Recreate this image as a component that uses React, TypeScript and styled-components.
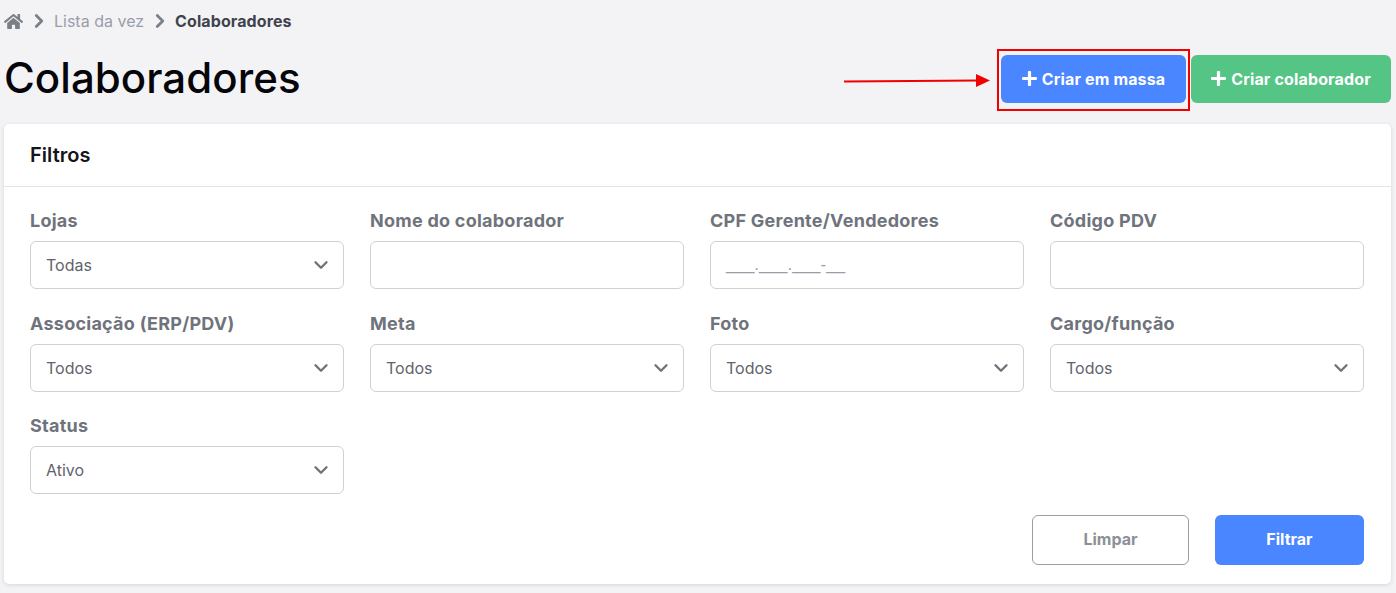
import React from 'react';
import styled, { createGlobalStyle } from 'styled-components';
import { FaHome, FaPlus } from 'react-icons/fa';
import { FiChevronDown, FiChevronRight } from 'react-icons/fi';

const GlobalStyle = createGlobalStyle`
  html, body {
    margin: 0;
    padding: 0;
    background: #f3f3f6;
    font-family: "Inter", "Liberation Sans", sans-serif;
  }
  * { box-sizing: border-box; }
`;

type FieldDef = { label: string; value?: string; select?: boolean; mask?: boolean };

const FIELDS: FieldDef[] = [
  { label: 'Lojas', value: 'Todas', select: true },
  { label: 'Nome do colaborador' },
  { label: 'CPF Gerente/Vendedores', value: '___.___.___-__', mask: true },
  { label: 'Código PDV' },
  { label: 'Associação (ERP/PDV)', value: 'Todos', select: true },
  { label: 'Meta', value: 'Todos', select: true },
  { label: 'Foto', value: 'Todos', select: true },
  { label: 'Cargo/função', value: 'Todos', select: true },
  { label: 'Status', value: 'Ativo', select: true },
];

export default function App() {
  return (
    <Page>
      <GlobalStyle />
      <Breadcrumb>
        <HomeIcon size={19} />
        <Sep><FiChevronRight size={22} strokeWidth={3} /></Sep>
        <Crumb>Lista da vez</Crumb>
        <Sep><FiChevronRight size={22} strokeWidth={3} /></Sep>
        <Crumb $current>Colaboradores</Crumb>
      </Breadcrumb>

      <Header>
        <Title>Colaboradores</Title>
        <Actions>
          <Highlight>
            <Arrow width="147" height="14" viewBox="0 0 147 14">
              <line x1="0" y1="7.5" x2="134" y2="6.5" stroke="#f00000" strokeWidth="2" />
              <polygon points="132,0 146,6.5 132,13" fill="#f00000" />
            </Arrow>
            <ActionButton $color="#4a86ff">
              <FaPlus size={17} /> Criar em massa
            </ActionButton>
          </Highlight>
          <ActionButton $color="#55c585" $wide>
            <FaPlus size={17} /> Criar colaborador
          </ActionButton>
        </Actions>
      </Header>

      <Card>
        <CardHeader>Filtros</CardHeader>
        <CardBody>
          <Grid>
            {FIELDS.map((f) => (
              <Field key={f.label}>
                <Label>{f.label}</Label>
                <Control $mask={f.mask}>
                  {f.value}
                  {f.select && (
                    <Chevron><FiChevronDown size={22} strokeWidth={2.6} /></Chevron>
                  )}
                </Control>
              </Field>
            ))}
          </Grid>
          <Footer>
            <Clear>Limpar</Clear>
            <Submit>Filtrar</Submit>
          </Footer>
        </CardBody>
      </Card>
    </Page>
  );
}

const Page = styled.div`
  width: 1396px;
  height: 593px;
  padding: 0 5px 0 4px;
  overflow: hidden;
`;
const Breadcrumb = styled.div`
  display: flex;
  align-items: center;
  height: 42px;
  font-size: 16px;
`;
const HomeIcon = styled(FaHome)`
  color: #7b8088;
  margin-right: 2px;
`;
const Sep = styled.span`
  display: flex;
  color: #7b8088;
  margin: 0 2px 0 3px;
`;
const Crumb = styled.span<{ $current?: boolean }>`
  color: ${(p) => (p.$current ? '#3f434c' : '#9a9ea8')};
  font-weight: ${(p) => (p.$current ? 700 : 400)};
  letter-spacing: ${(p) => (p.$current ? '0.1px' : '0')};
  margin: 0 2px;
`;
const Header = styled.div`
  display: flex;
  align-items: flex-start;
  justify-content: space-between;
  height: 72px;
`;
const Title = styled.h1`
  margin: 0;
  line-height: 72px;
  font-size: 42px;
  font-weight: 500;
  letter-spacing: 0.05px;
  color: #06060a;
`;
const Actions = styled.div`
  display: flex;
  align-items: flex-start;
  margin-top: 7px;
`;
const Highlight = styled.div`
  position: relative;
  display: flex;
  border: 2px solid #f00000;
  margin-right: 1px;
  padding: 4px 2px 6px 2px;
`;
const Arrow = styled.svg`
  position: absolute;
  left: -155px;
  top: 23px;
`;
const ActionButton = styled.button<{ $color: string; $wide?: boolean }>`
  display: flex;
  align-items: center;
  justify-content: center;
  gap: 4px;
  width: ${(p) => (p.$wide ? 200 : 185)}px;
  height: 48px;
  padding: 0 1px 1px 0;
  margin-top: ${(p) => (p.$wide ? 6 : 0)}px;
  border: none;
  border-radius: 6px;
  background: ${(p) => p.$color};
  color: #fff;
  font-family: "Inter", sans-serif;
  font-size: 16px;
  font-weight: 700;
  letter-spacing: 0.15px;
`;
const Card = styled.section`
  height: 460px;
  margin-top: 10px;
  background: #fff;
  border-radius: 5px;
  box-shadow: 0 1px 4px rgba(0, 0, 0, 0.12);
`;
const CardHeader = styled.div`
  display: flex;
  align-items: center;
  height: 63px;
  padding: 0 26px;
  border-bottom: 1px solid #e3e4e8;
  font-size: 20px;
  font-weight: 600;
  letter-spacing: 0.05px;
  color: #14141a;
`;
const CardBody = styled.div`
  padding: 23px 26px 0;
`;
const Grid = styled.div`
  display: grid;
  grid-template-columns: repeat(4, 314px);
  column-gap: 26px;
  row-gap: 23.5px;
`;
const Field = styled.div`
  display: flex;
  flex-direction: column;
`;
const Label = styled.label`
  height: 22px;
  line-height: 22px;
  margin-bottom: 9px;
  font-size: 18px;
  font-weight: 700;
  letter-spacing: 0.25px;
  color: #6f737c;
`;
const Control = styled.div<{ $mask?: boolean }>`
  display: flex;
  align-items: center;
  justify-content: space-between;
  height: 48px;
  padding: 0 11px 0 15px;
  border: 1px solid #cfd1d6;
  border-radius: 6px;
  font-family: ${(p) => (p.$mask ? '"Liberation Sans", sans-serif' : 'inherit')};
  font-size: ${(p) => (p.$mask ? 17 : 16)}px;
  color: ${(p) => (p.$mask ? '#9a9ea8' : '#5f636c')};
`;
const Chevron = styled.span`
  display: flex;
  color: #6f737c;
`;
const Footer = styled.div`
  display: flex;
  justify-content: flex-end;
  gap: 26px;
  margin-top: 21px;
  padding-right: 1px;
`;
const Clear = styled.button`
  width: 157px;
  height: 50px;
  padding-bottom: 3px;
  background: #fff;
  border: 1px solid #9a9da5;
  border-radius: 6px;
  color: #8d9098;
  font-family: "Inter", sans-serif;
  font-size: 16px;
  font-weight: 700;
`;
const Submit = styled.button`
  width: 149px;
  height: 50px;
  padding-bottom: 3px;
  background: #4a86ff;
  border: none;
  border-radius: 6px;
  color: #fff;
  font-family: "Inter", sans-serif;
  font-size: 16px;
  font-weight: 700;
`;
